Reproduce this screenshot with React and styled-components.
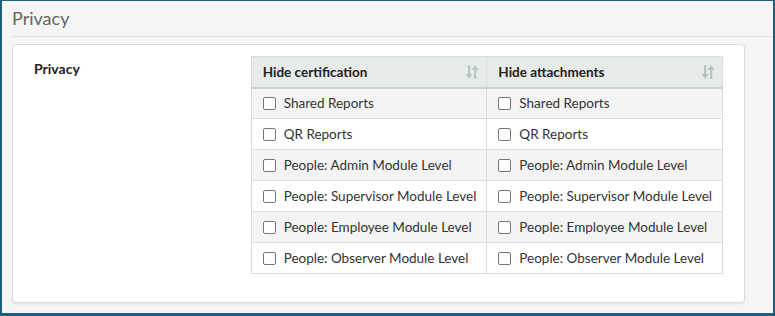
import React from 'react';
import styled, { createGlobalStyle } from 'styled-components';

const GlobalStyle = createGlobalStyle`
  body {
    margin: 0;
    font-family: Lato, "Open Sans", sans-serif;
  }
`;

const Frame = styled.div`
  width: 775px;
  height: 316px;
  box-sizing: border-box;
  border: 2px solid #1e5f7d;
  border-top-width: 1px;
  border-bottom-width: 3px;
  background: #f5f5f5;
  display: flex;
  flex-direction: column;
`;

const PageTitle = styled.div`
  height: 29px;
  margin-left: 10px;
  padding-top: 6px;
  font-size: 18px;
  color: #666;
  border-bottom: 1px solid #e3e3e3;
`;

const Card = styled.div`
  margin: 7px 28px 0 10px;
  background: #fff;
  border: 1px solid #ddd;
  border-radius: 4px;
  box-shadow: 0 1px 2px rgba(0, 0, 0, 0.08);
  padding: 11px 21px 28px 21px;
  display: flex;
`;

const Label = styled.div`
  width: 217px;
  font-weight: 700;
  font-size: 14px;
  color: #222;
  padding-top: 4px;
`;

const Table = styled.table`
  border-collapse: collapse;
  font-size: 13.5px;
  color: #333;
`;

const HeadCell = styled.th`
  width: 236px;
  height: 31px;
  box-sizing: border-box;
  padding: 0 7px 0 11px;
  background: #e6ebe8;
  border: 1px solid #dcdcdc;
  border-bottom: 2px solid #cfcfcf;
  text-align: left;
  font-weight: 700;
  color: #222;
`;

const HeadInner = styled.div`
  display: flex;
  align-items: center;
  justify-content: space-between;
`;

const Row = styled.tr`
  background: ${p => (p.$striped ? '#f4f4f4' : '#fff')};
`;

const Cell = styled.td`
  height: 31px;
  box-sizing: border-box;
  padding: 0 8px 0 11px;
  border: 1px solid #dcdcdc;
`;

const CheckLabel = styled.label`
  display: flex;
  align-items: center;
  gap: 8px;
`;

const Box = styled.span`
  width: 11px;
  height: 11px;
  border: 1px solid #767676;
  border-radius: 2px;
  background: #fff;
  flex: none;
`;

function SortIcon() {
  return (
    <svg width="14" height="16" viewBox="0 0 14 16">
      <g fill="#b7c6c2">
        <rect x="3" y="1" width="2.2" height="10" />
        <polygon points="0.5,10 7.7,10 4.1,15" />
        <rect x="9" y="5" width="2.2" height="10" />
        <polygon points="6.5,6 13.7,6 10.1,1" />
      </g>
    </svg>
  );
}

const items = [
  'Shared Reports',
  'QR Reports',
  'People: Admin Module Level',
  'People: Supervisor Module Level',
  'People: Employee Module Level',
  'People: Observer Module Level',
];

export default function App() {
  return (
    <Frame>
      <GlobalStyle />
      <PageTitle>Privacy</PageTitle>
      <Card>
        <Label>Privacy</Label>
        <Table>
          <thead>
            <tr>
              <HeadCell>
                <HeadInner>
                  Hide certification <SortIcon />
                </HeadInner>
              </HeadCell>
              <HeadCell>
                <HeadInner>
                  Hide attachments <SortIcon />
                </HeadInner>
              </HeadCell>
            </tr>
          </thead>
          <tbody>
            {items.map((item, i) => (
              <Row key={item} $striped={i % 2 === 0}>
                <Cell>
                  <CheckLabel>
                    <Box />
                    {item}
                  </CheckLabel>
                </Cell>
                <Cell>
                  <CheckLabel>
                    <Box />
                    {item}
                  </CheckLabel>
                </Cell>
              </Row>
            ))}
          </tbody>
        </Table>
      </Card>
    </Frame>
  );
}
